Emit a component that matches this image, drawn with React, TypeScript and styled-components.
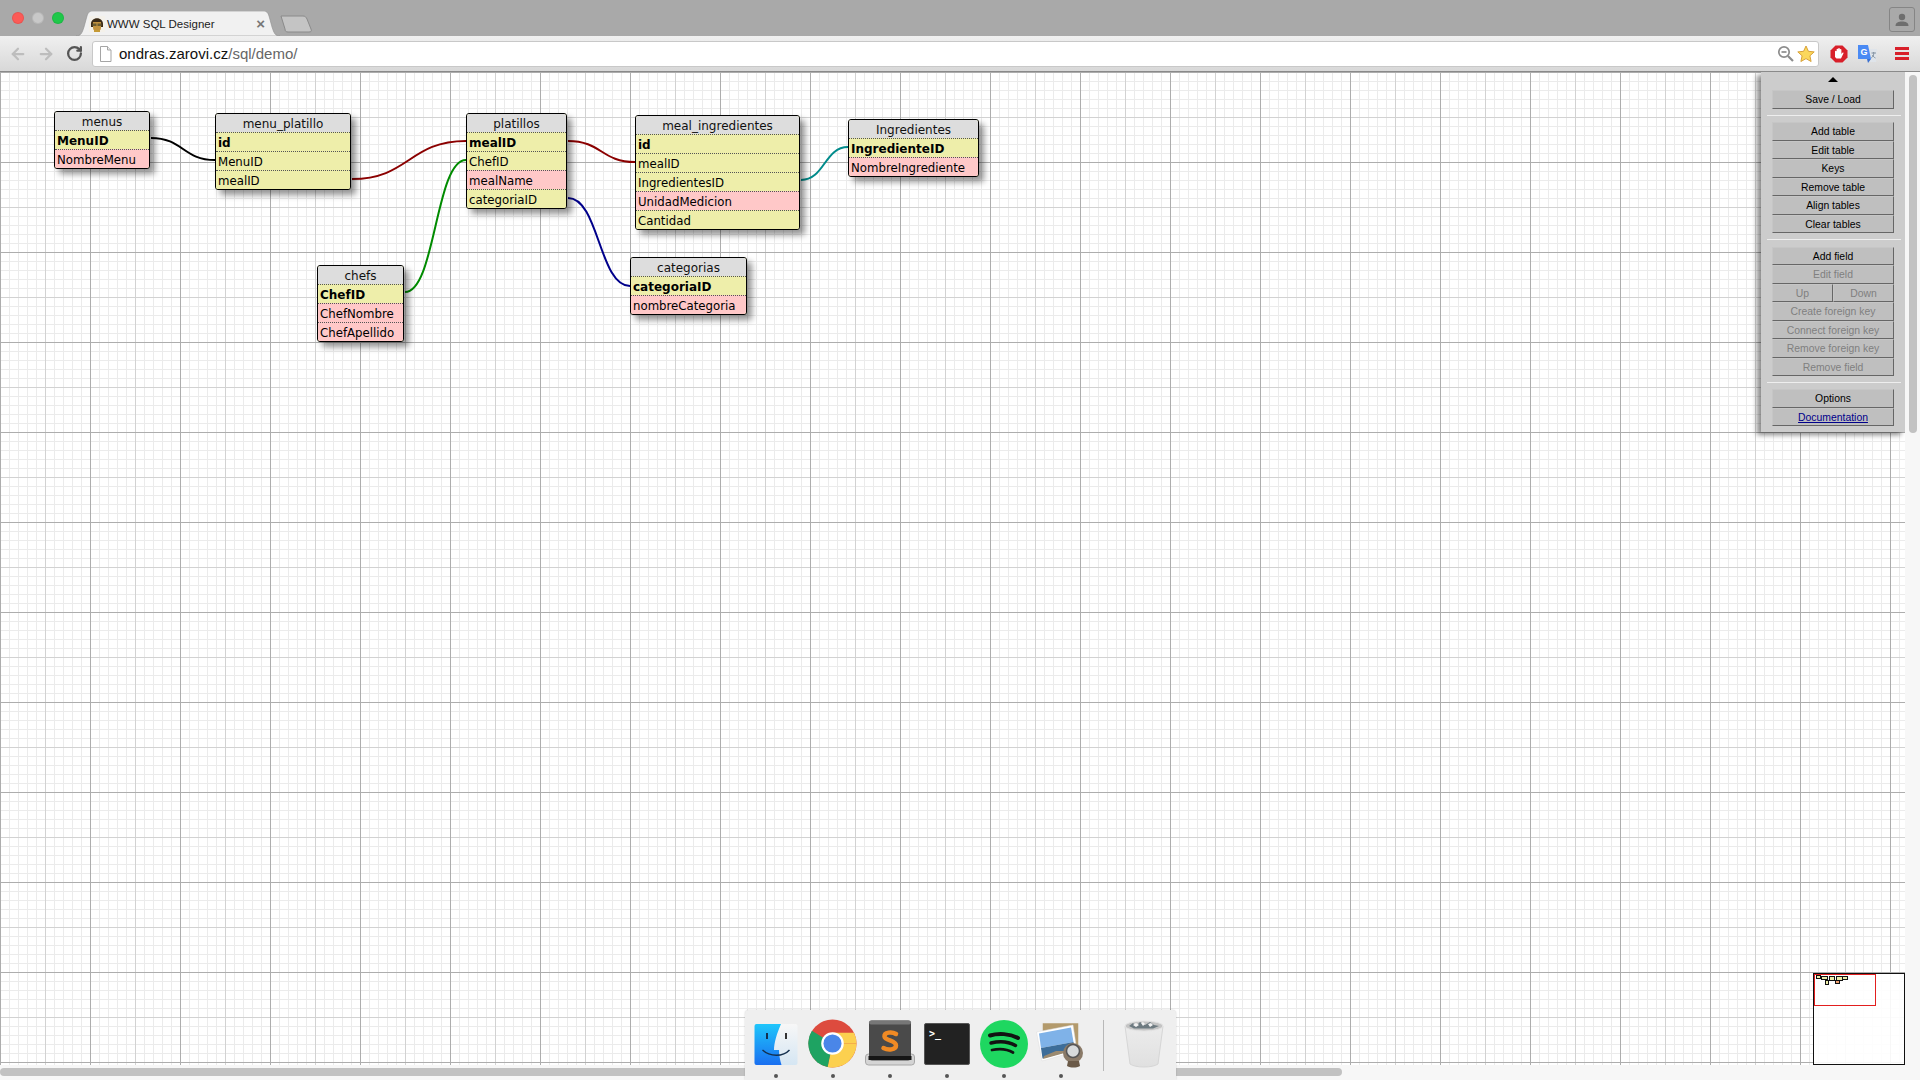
import React from "react";
import styled, { createGlobalStyle } from "styled-components";
import { ArrowLeft, ArrowRight, RotateCw } from "lucide-react";

const Global = createGlobalStyle`
  html, body { margin: 0; padding: 0; background: #fff; overflow: hidden; }
  * { box-sizing: border-box; }
`;

const Page = styled.div`
  width: 1920px; height: 1080px; position: relative; overflow: hidden;
  display: flex; flex-direction: column;
  font-family: "Liberation Sans", Arial, sans-serif;
`;

/* ---------- browser chrome ---------- */
const TabStrip = styled.div`
  height: 36px; background: #a9a9a9; display: flex; align-items: flex-end; position: relative;
  padding-left: 76px; flex: none;
`;
const Lights = styled.div`
  position: absolute; left: 12px; top: 12px; display: flex; gap: 8px;
`;
const Light = styled.span<{ $c: string }>`
  width: 12px; height: 12px; border-radius: 50%; background: ${p => p.$c};
  box-shadow: inset 0 0 0 1px rgba(0,0,0,.08);
`;
const Tab = styled.div`
  width: 204px; height: 25px; position: relative; display: flex; align-items: center;
  padding: 0 15px 0 13px; font-size: 11.5px; color: #222;
`;
const TabShape = styled.svg`
  position: absolute; left: 0; top: 0; width: 204px; height: 25px; z-index: 0;
`;
const FaviconSvg = styled.svg`position: relative; flex: none;`;
const TabTitle = styled.span`
  position: relative; margin-left: 2px; flex: 1; white-space: nowrap; padding-top: 1px;
`;
const TabClose = styled.span`
  position: relative; color: #777; font-size: 15px; line-height: 1; font-weight: bold;
`;
const NewTab = styled.svg`
  width: 34px; height: 18px; margin-bottom: 3px; flex: none;
`;
const ProfileBtn = styled.div`
  position: absolute; left: 1889px; top: 7px; width: 26px; height: 25px;
  border: 1px solid #858585; border-radius: 3px; display: flex; align-items: center; justify-content: center;
`;
const Toolbar = styled.div`
  height: 36px; flex: none; display: flex; align-items: center; position: relative;
  background: linear-gradient(#f0f0f0, #d8d8d8); border-bottom: 1px solid #8a8a8a; padding-left: 4px;
`;
const NavBtn = styled.div<{ $c: string }>`
  width: 28px; height: 24px; display: flex; align-items: center; justify-content: center; color: ${p => p.$c}; flex: none;
`;
const Omnibox = styled.div`
  margin-left: 4px; width: 1727px; height: 26px; background: #fff; border: 1px solid #c8c8c8; border-radius: 3px;
  display: flex; align-items: center; padding-left: 6px; flex: none;
`;
const Url = styled.span`
  margin-left: 7px; font-size: 15px; color: #111; white-space: nowrap; flex: 1;
`;
const UrlPath = styled.span`color: #666;`;
const OmniIcon = styled.svg`flex: none; margin-right: 3px;`;
const ExtWrap = styled.div`
  margin-left: 11px; flex: none; display: flex; align-items: center; gap: 10px;
`;
const MenuIcon = styled.svg`margin-left: 7px;`;

/* ---------- viewport ---------- */
const Viewport = styled.div`
  flex: 1; display: grid; grid-template-columns: 1fr 15px; grid-template-rows: 1fr 15px; min-height: 0; background: #f6f6f6;
`;
const Canvas = styled.div`
  position: relative; overflow: hidden; background-color: #fff;
  background-image:
    linear-gradient(to right, #adadad 1px, transparent 1px),
    linear-gradient(to bottom, #adadad 1px, transparent 1px),
    linear-gradient(to right, #d2d2d2 1px, transparent 1px),
    linear-gradient(to bottom, #d2d2d2 1px, transparent 1px),
    linear-gradient(to right, #ebebeb 1px, transparent 1px),
    linear-gradient(to bottom, #ebebeb 1px, transparent 1px);
  background-size: 90px 90px, 90px 90px, 45px 45px, 45px 45px, 9px 9px, 9px 9px;
`;
const VTrack = styled.div`background: #f7f7f7; padding: 3px 4px 0; display: flex; flex-direction: column;`;
const VThumb = styled.div`width: 8px; height: 358px; border-radius: 4px; background: #c2c2c2;`;
const HTrack = styled.div`background: #f7f7f7; padding: 3px 0 0 0;`;
const HThumb = styled.div`width: 1342px; height: 8px; border-radius: 4px; background: #c2c2c2;`;
const Corner = styled.div`background: #f7f7f7;`;

/* ---------- designer ---------- */
const Relations = styled.svg`position: absolute; left: 0; top: 0; width: 1000px; height: 400px; pointer-events: none;`;
const DbTable = styled.div<{ $x: number; $y: number; $w: number }>`
  position: absolute; left: ${p => p.$x}px; top: ${p => p.$y}px; width: ${p => p.$w}px;
  border: 1px solid #000; border-radius: 3px; overflow: hidden; background: #eeeeaa;
  box-shadow: 5px 5px 6px rgba(0,0,0,.42);
  font-family: "DejaVu Sans", Verdana, sans-serif; font-size: 11.75px; color: #000;
`;
const DbTitle = styled.div`
  height: 18px; line-height: 18px; padding-top: 1px; text-align: center; background: #dddddd; color: #111; font-size: 12px;
`;
const DbRow = styled.div<{ $pk?: boolean; $plain?: boolean }>`
  height: 19px; line-height: 17px; padding-top: 2px; border-top: 1px dotted #555; padding-left: 2px; white-space: nowrap;
  background: ${p => (p.$plain ? "#ffc8c8" : "#eeeeaa")};
  font-weight: ${p => (p.$pk ? "bold" : "normal")};
  font-size: ${p => (p.$pk ? "12px" : "11.75px")};
`;

/* ---------- side bar ---------- */
const Bar = styled.div`
  position: absolute; left: 1761px; top: 0; width: 144px; height: 360px; background: #cccccc;
  box-shadow: -4px 3px 5px rgba(0,0,0,.45); padding: 0 11px; display: flex; flex-direction: column;
`;
const Arrow = styled.div`
  height: 18px; display: flex; justify-content: center; padding-top: 5px;
  &::before {
    content: ""; width: 0; height: 0; border-left: 5px solid transparent; border-right: 5px solid transparent;
    border-bottom: 5px solid #000;
  }
`;
const Rule = styled.hr<{ $gap: number }>`
  width: 134px; margin: 6px 0 ${p => p.$gap}px -5px; border: 0; border-top: 1px solid #eee; height: 1px; flex: none;
`;
const Btn = styled.div<{ $off?: boolean }>`
  height: 18.5px; flex: none; width: 122px; background: #bfbfbf; display: flex; align-items: center; justify-content: center;
  border-top: 1px solid #c6c6c6; border-left: 1px solid #c6c6c6;
  border-right: 1px solid #666; border-bottom: 1px solid #666;
  font-size: 10.4px; color: ${p => (p.$off ? "#808080" : "#000")}; white-space: nowrap; padding-top: 1px;
`;
const BtnPair = styled.div`display: flex; flex: none; width: 122px;`;
const HalfBtn = styled(Btn)`flex: 1; width: auto; min-width: 0;`;
const DocLink = styled.span`color: #00008b; text-decoration: underline;`;

/* ---------- mini map ---------- */
const Mini = styled.div`
  position: absolute; left: 1813px; top: 901px; width: 92px; height: 92px;
  border: 1px solid #111; background: rgba(255,255,255,.9);
`;
const MiniPort = styled.div`
  position: absolute; left: 0; top: 0; width: 62px; height: 32px; border: 1px solid #e21e1e;
`;
const MiniTbl = styled.div<{ $x: number; $y: number; $w: number; $h: number; $pink?: boolean }>`
  position: absolute; left: ${p => p.$x}px; top: ${p => p.$y}px; width: ${p => p.$w}px; height: ${p => p.$h}px;
  border: 1px solid #111; background: ${p => (p.$pink ? "#f0a070" : "#eeeeaa")};
`;

/* ---------- dock ---------- */
const Dock = styled.div`
  position: absolute; left: 745px; top: 1010px; width: 431px; height: 70px; background: #efefef;
  border-radius: 4px 4px 0 0; box-shadow: 0 0 2px rgba(0,0,0,.2); display: flex; padding-left: 2px;
`;
const DockItem = styled.div<{ $top: number }>`
  width: 57px; height: 70px; flex: none; position: relative; display: flex; justify-content: center; align-items: flex-start;
  padding-top: ${p => p.$top}px;
  &::after {
    content: ""; position: absolute; left: 27px; top: 64px; width: 4px; height: 4px; border-radius: 50%; background: #555;
  }
`;
const DockSep = styled.div`width: 1px; height: 51px; background: #b8b8b8; margin: 10px 0 0 14px; flex: none;`;
const TrashSlot = styled.div`margin-left: 20px; padding-top: 8px; flex: none;`;

const tables = [
  { name: "menus", x: 54, y: 39, w: 96, rows: [["MenuID", "pk"], ["NombreMenu", "x"]] },
  { name: "menu_platillo", x: 215, y: 41, w: 136, rows: [["id", "pk"], ["MenuID", ""], ["mealID", ""]] },
  { name: "chefs", x: 317, y: 193, w: 87, rows: [["ChefID", "pk"], ["ChefNombre", "x"], ["ChefApellido", "x"]] },
  { name: "platillos", x: 466, y: 41, w: 101, rows: [["mealID", "pk"], ["ChefID", ""], ["mealName", "x"], ["categoriaID", ""]] },
  { name: "meal_ingredientes", x: 635, y: 43, w: 165, rows: [["id", "pk"], ["mealID", ""], ["IngredientesID", ""], ["UnidadMedicion", "x"], ["Cantidad", ""]] },
  { name: "categorias", x: 630, y: 185, w: 117, rows: [["categoriaID", "pk"], ["nombreCategoria", "x"]] },
  { name: "Ingredientes", x: 848, y: 47, w: 131, rows: [["IngredienteID", "pk"], ["NombreIngrediente", "x"]] },
];

const links: [number, number, number, number, string][] = [
  [151, 66, 215, 88, "#000000"],
  [352, 107, 466, 69, "#8b0000"],
  [568, 69, 635, 90, "#8b0000"],
  [405, 220, 466, 88, "#008b00"],
  [568, 126, 630, 214, "#00008b"],
  [801, 108, 848, 75, "#008b8b"],
];

const mini = [
  [2, 1, 5, 4],
  [7, 2, 7, 4],
  [11, 6, 4, 5],
  [15, 2, 6, 5],
  [22, 2, 7, 5],
  [21, 6, 5, 4, 1],
  [28, 2, 6, 4],
];

const FinderIcon = () => (
  <svg width="44" height="44" viewBox="0 0 44 44">
    <defs>
      <linearGradient id="fb" x1="0" y1="0" x2="0" y2="1"><stop offset="0" stopColor="#1fc6fb" /><stop offset="1" stopColor="#1a6ff0" /></linearGradient>
      <linearGradient id="fw" x1="0" y1="0" x2="0" y2="1"><stop offset="0" stopColor="#f7f7f7" /><stop offset="1" stopColor="#d5e6f3" /></linearGradient>
    </defs>
    <rect x="0.5" y="1" width="43" height="41" rx="2" fill="url(#fw)" />
    <path d="M2.5 1H27C23 10 20 20 20 27h5c0 5 1 10 2.5 15H2.5a2 2 0 0 1-2-2V3a2 2 0 0 1 2-2z" fill="url(#fb)" />
    <rect x="12" y="10" width="2" height="6" fill="#14304e" />
    <rect x="31" y="10" width="2" height="6" fill="#333" />
    <path d="M8.5 27C16 34 29 34 35.5 27" fill="none" stroke="#14304e" strokeWidth="1.4" />
  </svg>
);
const ChromeIcon = () => (
  <svg width="49" height="49" viewBox="0 0 50 50">
    <circle cx="25" cy="25" r="24.5" fill="#dd4b3e" />
    <path d="M25 25L49.5 25A24.5 24.5 0 0 1 20 49L25 25z" fill="#fcd04f" />
    <path d="M25 25L20 49A24.5 24.5 0 0 1 4 12L25 25z" fill="#1ea362" />
    <path d="M25 14H47A24.5 24.5 0 0 1 49.5 25L34 25z" fill="#fcd04f" />
    <circle cx="25" cy="25" r="11.5" fill="#fff" />
    <circle cx="25" cy="25" r="9.2" fill="#4a86e8" />
  </svg>
);
const SublimeIcon = () => (
  <svg width="50" height="46" viewBox="0 0 50 46">
    <rect x="0.5" y="34" width="49" height="11" rx="3" fill="#d4d4d4" stroke="#a8a8a8" />
    <rect x="4" y="0.5" width="42" height="40" rx="3" fill="#4a4a4a" />
    <rect x="4" y="0.5" width="42" height="4" rx="2" fill="#777" />
    <rect x="3.5" y="36" width="43" height="4" fill="#161616" />
    <path d="M31 14C27 11.500 19 12 19.500 16.500 20 21 31 20 31 25.500 31 30 23 30.500 18.500 28" fill="none" stroke="#f08a24" strokeWidth="4.500" strokeLinecap="round" />
  </svg>
);
const TerminalIcon = () => (
  <svg width="46" height="42" viewBox="0 0 46 42">
    <rect x="0.5" y="0.5" width="45" height="41" rx="1.5" fill="#222" stroke="#555" />
    <text x="5" y="14" fill="#fff" fontFamily="'DejaVu Sans Mono', monospace" fontSize="10" fontWeight="bold">&gt;_</text>
  </svg>
);
const SpotifyIcon = () => (
  <svg width="48" height="48" viewBox="0 0 48 48">
    <circle cx="24" cy="24" r="24" fill="#1ed760" />
    <g fill="none" stroke="#121212" strokeLinecap="round">
      <path d="M10 15.5C18 13 30 13.5 38 18" strokeWidth="4" />
      <path d="M11 23C19 21 28.5 21.5 35.5 25.5" strokeWidth="3.4" />
      <path d="M12 30C19 28.5 27 29 33 32.5" strokeWidth="2.8" />
    </g>
  </svg>
);
const PreviewIcon = () => (
  <svg width="50" height="46" viewBox="0 0 50 46">
    <rect x="6" y="0.5" width="37" height="29" fill="#b39a6c" stroke="#eee" strokeWidth="1.5" />
    <path d="M0.5 10L37 3 41 29 6 39z" fill="#fff" stroke="#ddd" strokeWidth=".5" />
    <path d="M3 11.5L35 5.5 37.5 20 5 26z" fill="#7fb2e8" />
    <path d="M5 26L37.5 20 39 27.5 6.5 36.5z" fill="#3d6d99" />
    <path d="M8 34l12-5 14 0 5 -2 .2 1L7 37z" fill="#9b8a70" />
    <circle cx="37" cy="31" r="10" fill="#8a7a68" />
    <circle cx="37" cy="29" r="6.5" fill="#d7dadb" stroke="#555" strokeWidth="1.5" />
    <path d="M32 39h11l1 5c-4 2-9 2-13 0z" fill="#6b5a48" />
  </svg>
);
const TrashIcon = () => (
  <svg width="40" height="50" viewBox="0 0 40 50">
    <defs>
      <linearGradient id="tr" x1="0" y1="0" x2="0" y2="1"><stop offset="0" stopColor="#ececec" /><stop offset="1" stopColor="#e0e0e0" /></linearGradient>
    </defs>
    <path d="M1 8L6 46C11 50 29 50 34 46L39 8z" fill="url(#tr)" stroke="#d6d6d6" />
    <ellipse cx="20" cy="8" rx="19" ry="5" fill="#c4c4c4" stroke="#e4e4e4" />
    <path d="M5 8l4-3 3 3 4-4 5 3 5-3 4 3 5 1-6 2.500H10z" fill="#6d7a80" />
    <path d="M9 7l3-2 3 2-3 2zM24 6l3-1 2 2-3 2zM17 5l2-1 2 2-2 2z" fill="#f2f2f2" />
  </svg>
);
const Favicon = () => (
  <FaviconSvg width="16" height="16" viewBox="0 0 16 16">
    <rect width="16" height="16" fill="#f4f1ea" />
    <path d="M2 9C1 0 15 0 14 9v2H2z" fill="#3a2a18" />
    <path d="M4 6h8v6c0 2-2 3.500-4 3.500S4 14 4 12z" fill="#c2923e" />
    <path d="M3.500 7.500h4v2.500h-4zM8.500 7.500h4v2.500h-4z" fill="#6a5a30" />
    <path d="M5 14h6v2H5z" fill="#c59a35" />
  </FaviconSvg>
);

export default function App() {
  return (
    <Page>
      <Global />
      <TabStrip>
        <Lights>
          <Light $c="#fc5b57" />
          <Light $c="#c8c8c8" />
          <Light $c="#1fc84a" />
        </Lights>
        <Tab>
          <TabShape viewBox="0 0 204 25">
            <path d="M0 25C5 25 6 22 8 16L11 5C12 2 13 0 17 0H187C191 0 192 2 193 5L196 16C198 22 199 25 204 25z" fill="#f1f1f1" stroke="#8e8e8e" strokeWidth=".6" />
          </TabShape>
          <Favicon />
          <TabTitle>WWW SQL Designer</TabTitle>
          <TabClose>×</TabClose>
        </Tab>
        <NewTab viewBox="0 0 34 18">
          <path d="M1 1H23C25 1 26 2 27 4L31 14C32 16 31 17 29 17H8C6 17 5 16 5 14z" fill="#c4c4c4" stroke="#8a8a8a" />
        </NewTab>
        <ProfileBtn>
          <svg width="14" height="14" viewBox="0 0 14 14">
            <circle cx="7" cy="4" r="3.2" fill="#6e6e6e" />
            <path d="M0.5 13c0-3.5 3-4.5 6.500-4.500s6.500 1 6.500 4.500z" fill="#6e6e6e" />
          </svg>
        </ProfileBtn>
      </TabStrip>
      <Toolbar>
        <NavBtn $c="#bdbdbd"><ArrowLeft size={18} strokeWidth={3} /></NavBtn>
        <NavBtn $c="#bdbdbd"><ArrowRight size={18} strokeWidth={3} /></NavBtn>
        <NavBtn $c="#555555"><RotateCw size={17} strokeWidth={3.2} /></NavBtn>
        <Omnibox>
          <svg width="13" height="16" viewBox="0 0 13 16">
            <path d="M1.500 .5H8.500L12 4V15.500H1.500z" fill="#fff" stroke="#a5a5a5" />
            <path d="M8.500 .5V4H12" fill="#eee" stroke="#a5a5a5" />
          </svg>
          <Url>ondras.zarovi.cz<UrlPath>/sql/demo/</UrlPath></Url>
          <OmniIcon width="17" height="17" viewBox="0 0 17 17">
            <circle cx="7" cy="7" r="5.200" fill="none" stroke="#8c8c8c" strokeWidth="1.700" />
            <path d="M4.500 7h5" stroke="#8c8c8c" strokeWidth="1.700" />
            <path d="M11 11l5 5" stroke="#8c8c8c" strokeWidth="2.200" />
          </OmniIcon>
          <OmniIcon width="18" height="18" viewBox="0 0 18 18">
            <path d="M9 1l2.400 5.300 5.800.6-4.300 3.900 1.200 5.700L9 13.600l-5.100 2.900 1.200-5.700L.8 6.900l5.800-.6z" fill="#fbd75b" stroke="#d8a23a" />
          </OmniIcon>
        </Omnibox>
        <ExtWrap>
          <svg width="18" height="18" viewBox="0 0 18 18">
            <path d="M5.500 .5h7l5 5v7l-5 5h-7l-5-5v-7z" fill="#d8202a" />
            <path d="M5 12V6.500a.8.8 0 0 1 1.600 0V9V4.500a.8.800 0 0 1 1.600 0V9V3.800a.8.800 0 0 1 1.600 0V9V4.800a.8.800 0 0 1 1.600 0V9l1-1.200c.8-.6 1.400 0 1 .6L11 13.500H6.500z" fill="#fff" />
          </svg>
          <svg width="20" height="20" viewBox="0 0 20 20">
            <path d="M10 5h9l-1 13h-6z" fill="#dfe4ea" />
            <path d="M0 1h10l3 14H0z" fill="#4a8af4" />
            <path d="M9 15h4l-3 4z" fill="#3a6fd0" />
            <text x="2.500" y="11" fontFamily="'Liberation Sans', sans-serif" fontSize="9" fontWeight="bold" fill="#fff">G</text>
            <path d="M13.500 9h4.500M15.700 8v1.500c0 2-1 3.500-2.500 4.500M14.500 11c.6 1.300 1.700 2.500 3 3" stroke="#7a8a9a" strokeWidth=".9" fill="none" />
          </svg>
          <MenuIcon width="14" height="13" viewBox="0 0 14 13">
            <path d="M0 0h14v3H0zM0 5h14v3H0zM0 10h14v3H0z" fill="#d8202a" />
          </MenuIcon>
        </ExtWrap>
      </Toolbar>
      <Viewport>
        <Canvas>
          <Relations viewBox="0 0 1000 400">
            {links.map(([a, b, c, d, color], i) => {
              const m = (a + c) / 2;
              return <path key={i} d={`M${a} ${b}C${m} ${b} ${m} ${d} ${c} ${d}`} fill="none" stroke={color} strokeWidth="2" />;
            })}
          </Relations>
          {tables.map(t => (
            <DbTable key={t.name} $x={t.x} $y={t.y} $w={t.w}>
              <DbTitle>{t.name}</DbTitle>
              {t.rows.map(([label, kind]) => (
                <DbRow key={label} $pk={kind === "pk"} $plain={kind === "x"}>{label}</DbRow>
              ))}
            </DbTable>
          ))}
          <Bar>
            <Arrow />
            <Btn>Save / Load</Btn>
            <Rule $gap={6.5} />
            <Btn>Add table</Btn>
            <Btn>Edit table</Btn>
            <Btn>Keys</Btn>
            <Btn>Remove table</Btn>
            <Btn>Align tables</Btn>
            <Btn>Clear tables</Btn>
            <Rule $gap={6.5} />
            <Btn>Add field</Btn>
            <Btn $off>Edit field</Btn>
            <BtnPair>
              <HalfBtn $off>Up</HalfBtn>
              <HalfBtn $off>Down</HalfBtn>
            </BtnPair>
            <Btn $off>Create foreign key</Btn>
            <Btn $off>Connect foreign key</Btn>
            <Btn $off>Remove foreign key</Btn>
            <Btn $off>Remove field</Btn>
            <Rule $gap={6} />
            <Btn>Options</Btn>
            <Btn><DocLink>Documentation</DocLink></Btn>
          </Bar>
          <Mini>
            <MiniPort />
            {mini.map(([x, y, w, h, pink], i) => (
              <MiniTbl key={i} $x={x} $y={y} $w={w} $h={h} $pink={!!pink} />
            ))}
          </Mini>
        </Canvas>
        <VTrack><VThumb /></VTrack>
        <HTrack><HThumb /></HTrack>
        <Corner />
      </Viewport>
      <Dock>
        <DockItem $top={13}><FinderIcon /></DockItem>
        <DockItem $top={9}><ChromeIcon /></DockItem>
        <DockItem $top={10}><SublimeIcon /></DockItem>
        <DockItem $top={13}><TerminalIcon /></DockItem>
        <DockItem $top={10}><SpotifyIcon /></DockItem>
        <DockItem $top={12}><PreviewIcon /></DockItem>
        <DockSep />
        <TrashSlot><TrashIcon /></TrashSlot>
      </Dock>
    </Page>
  );
}
